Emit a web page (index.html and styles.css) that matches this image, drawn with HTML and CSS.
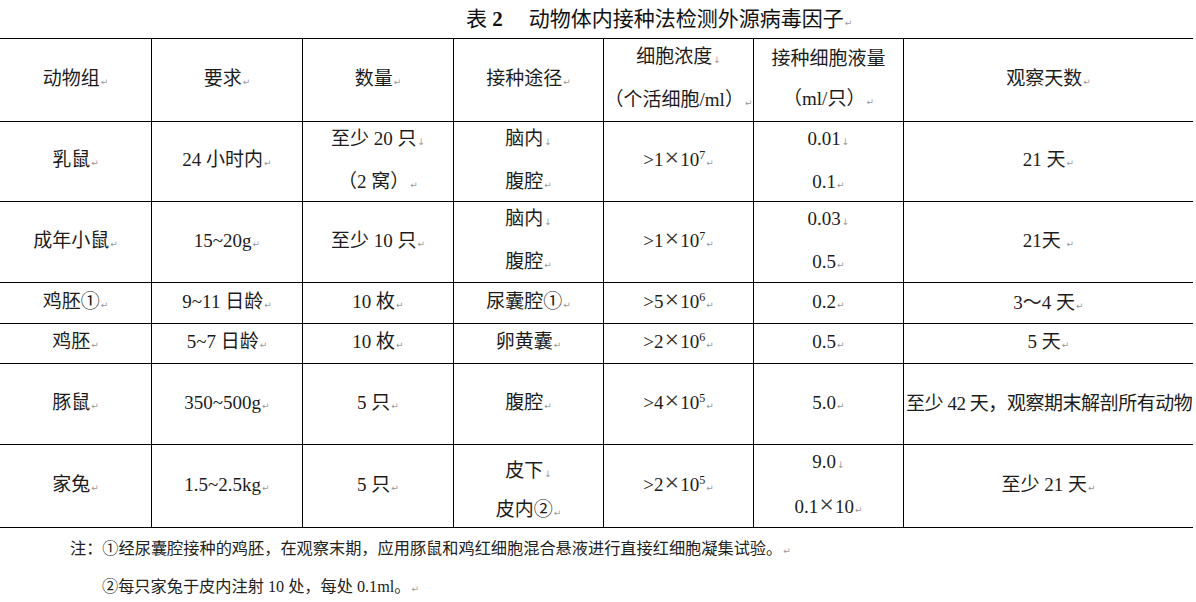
FILE: index.html
```html
<!DOCTYPE html>
<html lang="zh-CN">
<head>
<meta charset="utf-8">
<title>表 2 动物体内接种法检测外源病毒因子</title>
<link rel="stylesheet" href="styles.css">
</head>
<body>
<h1 class="title">表 <b>2</b><span class="tgap"></span>动物体内接种法检测外源病毒因子<span class="m">↵</span></h1>
<div class="table">
  <div class="cell"><span>动物组<span class="m">↵</span></span></div>
  <div class="cell"><span>要求<span class="m">↵</span></span></div>
  <div class="cell"><span>数量<span class="m">↵</span></span></div>
  <div class="cell"><span>接种途径<span class="m">↵</span></span></div>
  <div class="cell"><span>细胞浓度<span class="m">↓</span></span><span>（个活细胞/ml）<span class="m">↵</span></span></div>
  <div class="cell"><span>接种细胞液量</span><span>（ml/只）<span class="m">↵</span></span></div>
  <div class="cell"><span>观察天数<span class="m">↵</span></span></div>

  <div class="cell"><span>乳鼠<span class="m">↵</span></span></div>
  <div class="cell"><span>24 小时内<span class="m">↵</span></span></div>
  <div class="cell"><span>至少 20 只<span class="m">↓</span></span><span>（2 窝）<span class="m">↵</span></span></div>
  <div class="cell"><span>脑内<span class="m">↓</span></span><span>腹腔<span class="m">↵</span></span></div>
  <div class="cell"><span>&gt;1<span class="x">×</span>10<sup>7</sup><span class="m">↵</span></span></div>
  <div class="cell"><span>0.01<span class="m">↓</span></span><span>0.1<span class="m">↵</span></span></div>
  <div class="cell"><span>21 天<span class="m">↵</span></span></div>

  <div class="cell"><span>成年小鼠<span class="m">↵</span></span></div>
  <div class="cell"><span>15~20g<span class="m">↵</span></span></div>
  <div class="cell"><span>至少 10 只<span class="m">↵</span></span></div>
  <div class="cell"><span>脑内<span class="m">↓</span></span><span>腹腔<span class="m">↵</span></span></div>
  <div class="cell"><span>&gt;1<span class="x">×</span>10<sup>7</sup><span class="m">↵</span></span></div>
  <div class="cell"><span>0.03<span class="m">↓</span></span><span>0.5<span class="m">↵</span></span></div>
  <div class="cell"><span>21天 <span class="m">↵</span></span></div>

  <div class="cell"><span>鸡胚①<span class="m">↵</span></span></div>
  <div class="cell"><span>9~11 日龄<span class="m">↵</span></span></div>
  <div class="cell"><span>10 枚<span class="m">↵</span></span></div>
  <div class="cell"><span>尿囊腔①<span class="m">↵</span></span></div>
  <div class="cell"><span>&gt;5<span class="x">×</span>10<sup>6</sup><span class="m">↵</span></span></div>
  <div class="cell"><span>0.2<span class="m">↵</span></span></div>
  <div class="cell"><span>3<span class="cjk">～</span>4 天<span class="m">↵</span></span></div>

  <div class="cell"><span>鸡胚<span class="m">↵</span></span></div>
  <div class="cell"><span>5~7 日龄<span class="m">↵</span></span></div>
  <div class="cell"><span>10 枚<span class="m">↵</span></span></div>
  <div class="cell"><span>卵黄囊<span class="m">↵</span></span></div>
  <div class="cell"><span>&gt;2<span class="x">×</span>10<sup>6</sup><span class="m">↵</span></span></div>
  <div class="cell"><span>0.5<span class="m">↵</span></span></div>
  <div class="cell"><span>5 天<span class="m">↵</span></span></div>

  <div class="cell"><span>豚鼠<span class="m">↵</span></span></div>
  <div class="cell"><span>350~500g<span class="m">↵</span></span></div>
  <div class="cell"><span>5 只<span class="m">↵</span></span></div>
  <div class="cell"><span>腹腔<span class="m">↵</span></span></div>
  <div class="cell"><span>&gt;4<span class="x">×</span>10<sup>5</sup><span class="m">↵</span></span></div>
  <div class="cell"><span>5.0<span class="m">↵</span></span></div>
  <div class="cell left"><span class="long">至少 42 天，观察期末解剖所有动物</span></div>

  <div class="cell"><span>家兔<span class="m">↵</span></span></div>
  <div class="cell"><span>1.5~2.5kg<span class="m">↵</span></span></div>
  <div class="cell"><span>5 只<span class="m">↵</span></span></div>
  <div class="cell tight"><span>皮下<span class="m">↓</span></span><span>皮内②<span class="m">↵</span></span></div>
  <div class="cell"><span>&gt;2<span class="x">×</span>10<sup>5</sup><span class="m">↵</span></span></div>
  <div class="cell wide"><span>9.0<span class="m">↓</span></span><span>0.1<span class="x">×</span>10<span class="m">↵</span></span></div>
  <div class="cell"><span>至少 21 天<span class="m">↵</span></span></div>
</div>
<div class="notes">
  <p class="note">注：①经尿囊腔接种的鸡胚，在观察末期，应用豚鼠和鸡红细胞混合悬液进行直接红细胞凝集试验。<span class="m">↵</span></p>
  <p class="note second">②每只家兔于皮内注射 10 处，每处 0.1ml。<span class="m">↵</span></p>
</div>
</body>
</html>
```

FILE: styles.css
```css
html, body {
  margin: 0;
  padding: 0;
  background: #fff;
}
body {
  width: 1196px;
  height: 602px;
  overflow: hidden;
  color: #1c1c1c;
  font-family: "Liberation Serif", "Noto Sans CJK SC", serif;
}
.title {
  margin: 0;
  height: 38px;
  line-height: 38px;
  padding-left: 466px;
  font-size: 21px;
  font-weight: normal;
  white-space: nowrap;
  color: #111;
}
.title b {
  font-weight: bold;
}
.tgap {
  display: inline-block;
  width: 26px;
}
.table {
  display: grid;
  grid-template-columns: 151px 150px 150px 149px 149px 149px 289px;
  grid-template-rows: 82px 79px 80px 40px 39px 80px 82px;
  gap: 1px;
  padding: 1px 0;
  width: 1193px;
  background: #000;
}
.cell {
  background: #fff;
  display: flex;
  flex-direction: column;
  align-items: center;
  justify-content: center;
  font-size: 19px;
  line-height: 40px;
  white-space: nowrap;
  overflow: hidden;
}
.cell.left {
  align-items: flex-start;
  padding-left: 2px;
}
.long {
  letter-spacing: -0.45px;
}
.cell.tight {
  line-height: 36px;
  padding-top: 12px;
}
.cell.wide {
  line-height: 42px;
}
.m {
  font-family: "DejaVu Sans", sans-serif;
  font-size: 9px;
  color: #9a9a9a;
  margin-left: 1px;
  letter-spacing: 0;
}
sup {
  font-size: 12px;
  line-height: 0;
  vertical-align: 7px;
}
.x {
  font-family: "Liberation Serif", serif;
  font-size: 26px;
  line-height: 0;
  font-weight: 300;
  margin: 0 1px;
  color: #333;
}
.cjk {
  font-family: "Noto Sans CJK SC", sans-serif;
}
.notes {
  padding-top: 2px;
}
.note {
  margin: 0;
  height: 38px;
  line-height: 38px;
  padding-left: 70px;
  font-size: 16.2px;
  white-space: nowrap;
  color: #222;
  font-family: "Liberation Serif", "Noto Sans CJK SC", serif;
}
.note.second {
  padding-left: 102px;
}
```
